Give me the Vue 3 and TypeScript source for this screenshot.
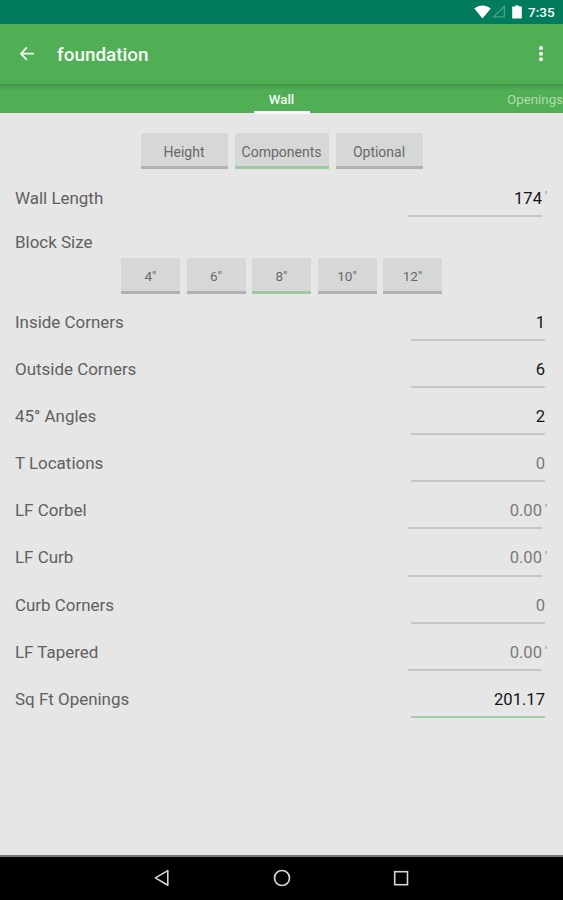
<script setup lang="ts">
interface Field {
  label: string
  value: string
  unit?: string
  filled?: boolean
  active?: boolean
}

const sections: string[] = ['Height', 'Components', 'Optional']
const sizes: string[] = ['4"', '6"', '8"', '10"', '12"']

const wallLength: Field = { label: 'Wall Length', value: '174', unit: "'", filled: true }

const fields: Field[] = [
  { label: 'Inside Corners', value: '1', filled: true },
  { label: 'Outside Corners', value: '6', filled: true },
  { label: '45° Angles', value: '2', filled: true },
  { label: 'T Locations', value: '0' },
  { label: 'LF Corbel', value: '0.00', unit: "'" },
  { label: 'LF Curb', value: '0.00', unit: "'" },
  { label: 'Curb Corners', value: '0' },
  { label: 'LF Tapered', value: '0.00', unit: "'" },
  { label: 'Sq Ft Openings', value: '201.17', filled: true, active: true },
]
</script>

<template>
  <div class="screen">
    <div class="status">
      <svg class="wifi" width="17" height="14" viewBox="0 0 17 14">
        <path d="M0.3 3.5C5 -0.5 12 -0.5 16.7 3.5L8.5 13.6Z" fill="#fff" />
      </svg>
      <svg class="signal" width="14" height="13" viewBox="0 0 14 13">
        <path d="M12.3 1.4V11.8H1.6Z" fill="none" stroke="#4fa287" stroke-width="1.3" />
      </svg>
      <svg class="battery" width="10" height="14" viewBox="0 0 10 14">
        <path d="M3 0.4h4v1.2h2.8v12H0.2v-12H3Z" fill="#fff" />
      </svg>
      <span class="clock">7:35</span>
    </div>

    <header class="toolbar">
      <svg class="back" width="16" height="16" viewBox="0 0 16 16">
        <path d="M7.9 1.3L1.9 7.7L7.9 14M2.1 7.7H15" fill="none" stroke="#f4fbf4" stroke-width="1.8" />
      </svg>
      <h1 class="title">foundation</h1>
      <svg class="more" width="6" height="18" viewBox="0 0 6 18">
        <circle cx="3" cy="3.1" r="2" fill="#fff" />
        <circle cx="3" cy="8.7" r="2" fill="#fff" />
        <circle cx="3" cy="14.2" r="2" fill="#fff" />
      </svg>
    </header>

    <nav class="tabs">
      <span></span>
      <span class="tab current">Wall</span>
      <span class="tab next">Openings</span>
    </nav>

    <main class="content">
      <div class="sections">
        <button v-for="s in sections" :key="s" class="btn section" :class="{ on: s === 'Components' }">{{ s }}</button>
      </div>

      <div class="row first">
        <span class="label">{{ wallLength.label }}</span>
        <span class="input filled">{{ wallLength.value }}</span>
        <span class="unit">{{ wallLength.unit }}</span>
      </div>

      <div class="label block-label">Block Size</div>
      <div class="sizes">
        <button v-for="s in sizes" :key="s" class="btn size" :class="{ on: s === '8&quot;' }">{{ s }}</button>
      </div>

      <div v-for="f in fields" :key="f.label" class="row">
        <span class="label">{{ f.label }}</span>
        <span class="input" :class="{ filled: f.filled, active: f.active }">{{ f.value }}</span>
        <span v-if="f.unit" class="unit">{{ f.unit }}</span>
      </div>
    </main>

    <footer class="navbar">
      <svg width="18" height="20" viewBox="0 0 18 20">
        <path d="M14.8 2.6V17.2L2.4 9.9Z" fill="none" stroke="#d6d6d6" stroke-width="1.6" stroke-linejoin="round" />
      </svg>
      <svg width="18" height="20" viewBox="0 0 18 20">
        <circle cx="9" cy="10" r="7.5" fill="none" stroke="#d6d6d6" stroke-width="1.7" />
      </svg>
      <svg width="18" height="20" viewBox="0 0 18 20">
        <rect x="2.7" y="3.7" width="12.8" height="13" fill="none" stroke="#d6d6d6" stroke-width="1.6" />
      </svg>
    </footer>
  </div>
</template>

<style>
body {
  background: #e6e6e6;
}
</style>

<style scoped>
.screen {
  width: 563px;
  height: 900px;
  display: flex;
  flex-direction: column;
  overflow: hidden;
  background: #e6e6e6;
  font-family: Roboto, "Liberation Sans", sans-serif;
}
.status {
  height: 23.5px;
  flex: none;
  display: flex;
  align-items: center;
  justify-content: flex-end;
  padding-right: 8px;
  background: #007b5c;
}
.signal {
  margin-left: 1px;
  margin-right: 6px;
}
.clock {
  margin-left: 6px;
  width: 27px;
  padding-top: 1px;
  color: #fff;
  font-size: 13.5px;
  line-height: 20px;
  font-weight: 500;
}
.toolbar {
  height: 60px;
  flex: none;
  display: flex;
  align-items: center;
  padding: 0 19px;
  box-sizing: border-box;
  background: #50af55;
}
.title {
  margin: 0 auto 0 22px;
  padding-top: 3px;
  color: #f7fcf7;
  font-size: 18.9px;
  line-height: 24px;
  font-weight: 500;
}
.tabs {
  height: 29.5px;
  flex: none;
  display: grid;
  grid-template-columns: 1fr 56px 1fr;
  background: linear-gradient(#419146, #4aa44f 3px, #50af55 7px);
}
.tab {
  font-size: 13.3px;
  line-height: 31px;
}
.current {
  height: 27px;
  text-align: center;
  color: #f4fbf4;
  font-weight: 500;
  border-bottom: 3px solid #fafafa;
}
.next {
  justify-self: end;
  color: #b0dab2;
}
.content {
  flex: 1;
  min-height: 0;
}
.sections {
  display: flex;
  justify-content: center;
  gap: 7px;
  padding-top: 20px;
}
.btn {
  height: 36px;
  box-sizing: border-box;
  padding: 3px 0 0;
  border: 0;
  border-bottom: 3px solid #b0b1b0;
  border-radius: 2px 2px 0 0;
  background: #d6d8d7;
  color: #686969;
  font: 14px Roboto, "Liberation Sans", sans-serif;
}
.btn.on {
  border-bottom-color: #9dcaa0;
}
.section {
  width: 87px;
  padding-top: 5px;
}
.section.on {
  width: 94px;
}
.sizes {
  display: flex;
  justify-content: center;
  gap: 6.5px;
}
.size {
  width: 59px;
  font-size: 13.5px;
}
.row {
  height: 47.1px;
  box-sizing: border-box;
  display: flex;
  align-items: stretch;
  padding: 0 18px 0 15px;
}
.first {
  height: 48px;
}
.row:has(.unit) {
  padding-right: 15px;
}
.label {
  margin-right: auto;
  color: #606060;
  font-size: 16.95px;
  line-height: 56.6px;
}
.first > .label {
  line-height: 58px;
}
.first > .input {
  line-height: 60px;
}
.block-label {
  height: 41px;
  line-height: 50px;
  padding-left: 15px;
}
.input {
  width: 134px;
  box-sizing: border-box;
  border-bottom: 2px solid #c6c6c6;
  color: #7a7a7a;
  font-size: 16.6px;
  line-height: 58px;
  text-align: right;
}
.filled {
  color: #141414;
}
.active {
  border-bottom-color: #a5cba7;
}
.unit {
  width: 6px;
  box-sizing: border-box;
  padding-left: 3px;
  color: #858585;
  font-size: 12px;
  line-height: 56px;
}
.navbar {
  height: 45px;
  flex: none;
  box-sizing: border-box;
  display: flex;
  align-items: center;
  justify-content: center;
  gap: 101.5px;
  padding-bottom: 2px;
  border-top: 2px solid #777;
  background: #000;
}
</style>
